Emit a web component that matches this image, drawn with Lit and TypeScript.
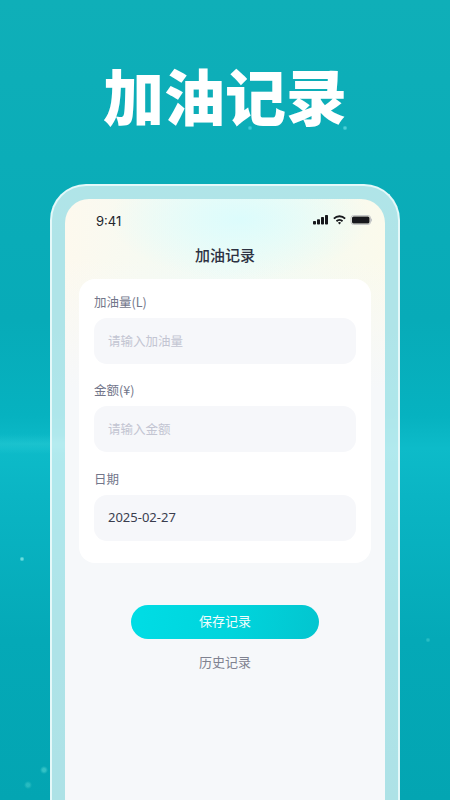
import { LitElement, html, css } from "lit";
import { customElement } from "lit/decorators.js";

@customElement("app-root")
export class AppRoot extends LitElement {
  static styles = css`
    :host {
      display: block;
      width: 450px;
      height: 800px;
      overflow: hidden;
      font-family: "Noto Sans CJK SC", "Noto Sans", sans-serif;
    }
    .page {
      height: 800px;
      box-sizing: border-box;
      overflow: hidden;
      display: flex;
      flex-direction: column;
      align-items: center;
      background:
        radial-gradient(circle at 22px 559px, rgba(150, 240, 235, 0.7) 0 1px, transparent 2.5px),
        radial-gradient(circle at 44px 770px, rgba(120, 235, 225, 0.4) 0 1.5px, transparent 4px),
        radial-gradient(circle at 28px 785px, rgba(120, 235, 225, 0.3) 0 1.5px, transparent 4px),
        radial-gradient(circle at 345px 128px, rgba(120, 230, 235, 0.6) 0 1px, transparent 2.5px),
        radial-gradient(circle at 250px 128px, rgba(90, 220, 235, 0.6) 0 1px, transparent 2.5px),
        radial-gradient(circle at 428px 640px, rgba(120, 235, 225, 0.3) 0 1px, transparent 2.5px),
        radial-gradient(ellipse 260px 10px at 30px 444px, rgba(70, 220, 225, 0.25), transparent),
        linear-gradient(
          180deg,
          #0fafb8 0%,
          #07abb8 40%,
          #06b2c0 52%,
          #0dbbc9 56%,
          #0ab5c4 62%,
          #04a9b7 80%,
          #03a5b2 100%
        );
    }
    .headline {
      margin: 0;
      padding-top: 47px;
      height: 184px;
      box-sizing: border-box;
      line-height: 95px;
      font-size: 61px;
      font-weight: 900;
      color: #fff;
      white-space: nowrap;
    }
    .phone {
      flex: none;
      width: 350px;
      height: 616px;
      box-sizing: border-box;
      padding: 13px 13px 0;
      border: 2px solid #e4f8f9;
      border-bottom: none;
      border-radius: 36px 36px 0 0;
      background: rgba(255, 255, 255, 0.68);
    }
    .screen {
      height: 100%;
      border-radius: 24px 24px 0 0;
      overflow: hidden;
      background:
        radial-gradient(ellipse 130px 60px at 175px 20px, #dcfcfc, transparent),
        linear-gradient(180deg, transparent 0, transparent 60px, #f6f8fa 190px),
        linear-gradient(90deg, #fdf9ee 0%, #f0fbf6 50%, #fbfaec 100%);
      background-color: #f6f8fa;
      display: flex;
      flex-direction: column;
    }
    .status {
      height: 43px;
      flex: none;
      box-sizing: border-box;
      padding: 13px 13px 0 31px;
      display: flex;
      justify-content: space-between;
      align-items: flex-start;
    }
    .time {
      font-family: "Inter", "Noto Sans", sans-serif;
      font-size: 13px;
      line-height: 18px;
      font-weight: 400;
      color: #23252c;
    }
    .status svg {
      display: block;
      margin-top: 2px;
    }
    .nav {
      flex: none;
      height: 37px;
      line-height: 25px;
      text-align: center;
      font-size: 15px;
      font-weight: 500;
      color: #2d3142;
    }
    .card {
      flex: none;
      margin: 0 14px;
      padding: 14px 15px 22px;
      border-radius: 16px;
      background: #fff;
      display: flex;
      flex-direction: column;
      gap: 17px;
    }
    .field:last-child {
      margin-top: 1px;
    }
    .field-label {
      font-size: 12.5px;
      line-height: 18px;
      height: 18px;
      margin-bottom: 7px;
      color: #72768a;
    }
    .input {
      height: 46px;
      box-sizing: border-box;
      padding: 0 14px 2px;
      border-radius: 13px;
      background: #f6f7fa;
      display: flex;
      align-items: center;
      font-size: 12.5px;
      color: #c3c5d2;
    }
    .input.filled {
      font-family: "Noto Sans", sans-serif;
      font-size: 13px;
      color: #3a3d4e;
    }
    .actions {
      flex: none;
      display: flex;
      flex-direction: column;
      align-items: center;
      padding-top: 42px;
    }
    .save {
      width: 188px;
      height: 34px;
      border-radius: 17px;
      background: linear-gradient(100deg, #00dde5 0%, #00d4dc 55%, #03c5cf 100%);
      color: #f2fdfd;
      font-size: 13px;
      line-height: 32px;
      text-align: center;
    }
    .history {
      margin-top: 13px;
      font-size: 13px;
      line-height: 20px;
      color: #7f8290;
    }
  `;

  private field(label: string, value: string, filled = false) {
    return html`<div class="field">
      <div class="field-label">${label}</div>
      <div class="input ${filled ? "filled" : ""}">${value}</div>
    </div>`;
  }

  render() {
    return html`<div class="page">
      <h1 class="headline">加油记录</h1>
      <div class="phone">
        <div class="screen">
          <div class="status">
            <span class="time">9:41</span>
            <svg width="59" height="11" viewBox="0 0 59 11" aria-hidden="true">
              <g fill="#17181c">
                <rect x="0" y="7" width="3" height="3.5" rx="0.8"></rect>
                <rect x="4" y="5.2" width="3" height="5.3" rx="0.8"></rect>
                <rect x="8" y="3" width="3" height="7.5" rx="0.8"></rect>
                <rect x="12" y="1" width="3" height="9.5" rx="0.8"></rect>
                <path d="M20.2 3.9a9 9 0 0 1 12.6 0l-1.3 1.4a7.1 7.1 0 0 0-10 0z"></path>
                <path d="M22.8 6.5a5.3 5.3 0 0 1 7.4 0l-1.3 1.4a3.4 3.4 0 0 0-4.8 0z"></path>
                <path d="M25 8.7a2.2 2.2 0 0 1 3 0l-1.5 1.7z"></path>
                <rect x="39" y="2.5" width="17.5" height="7" rx="1.5"></rect>
              </g>
              <rect x="38" y="1.5" width="19.5" height="9" rx="2.5" fill="none" stroke="#c4c6c6" stroke-width="1"></rect>
              <rect x="58" y="4.5" width="1" height="3" rx="0.5" fill="#c4c6c6"></rect>
            </svg>
          </div>
          <div class="nav">加油记录</div>
          <div class="card">
            ${this.field("加油量(L)", "请输入加油量")}
            ${this.field("金额(¥)", "请输入金额")}
            ${this.field("日期", "2025-02-27", true)}
          </div>
          <div class="actions">
            <div class="save">保存记录</div>
            <div class="history">历史记录</div>
          </div>
        </div>
      </div>
    </div>`;
  }
}
